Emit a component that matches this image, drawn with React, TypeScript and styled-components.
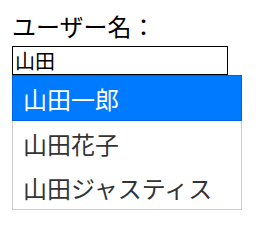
import React, { useState } from 'react';
import styled, { createGlobalStyle } from 'styled-components';

const GlobalStyle = createGlobalStyle`
  body {
    margin: 0;
    background: #fff;
    font-family: "Noto Sans CJK JP", "Noto Sans", sans-serif;
  }
`;

const Wrapper = styled.div`
  padding: 10px 12px;
  width: 230px;
`;

const Label = styled.label`
  display: block;
  font-size: 24px;
  line-height: 32px;
  color: #000;
  margin-bottom: 4px;
`;

const Input = styled.input`
  display: block;
  box-sizing: border-box;
  width: 216px;
  height: 29px;
  margin: 0;
  padding: 0 2px;
  border: 1px solid #000;
  font-family: inherit;
  font-size: 20px;
  color: #000;
  outline: none;
`;

const Suggestions = styled.ul`
  list-style: none;
  margin: 0;
  padding: 0;
  width: 230px;
  box-sizing: border-box;
  border: 1px solid #ccc;
  border-top: none;
`;

const Item = styled.li<{ $active?: boolean }>`
  box-sizing: border-box;
  height: ${p => (p.$active ? '46px' : '44px')};
  display: flex;
  align-items: center;
  padding: 0 10px;
  font-size: 24px;
  color: ${p => (p.$active ? '#fff' : '#333')};
  background: ${p => (p.$active ? '#007bff' : '#fff')};
  border: ${p => (p.$active ? '1px solid #0062e0' : 'none')};
  margin: ${p => (p.$active ? '0 -1px' : '0')};
`;

const names = ['山田一郎', '山田花子', '山田ジャスティス'];

export default function App() {
  const [value, setValue] = useState('山田');
  return (
    <>
      <GlobalStyle />
      <Wrapper>
        <Label htmlFor="user">ユーザー名：</Label>
        <Input id="user" value={value} onChange={e => setValue(e.target.value)} />
        <Suggestions>
          {names.map((n, i) => (
            <Item key={n} $active={i === 0}>
              {n}
            </Item>
          ))}
        </Suggestions>
      </Wrapper>
    </>
  );
}
